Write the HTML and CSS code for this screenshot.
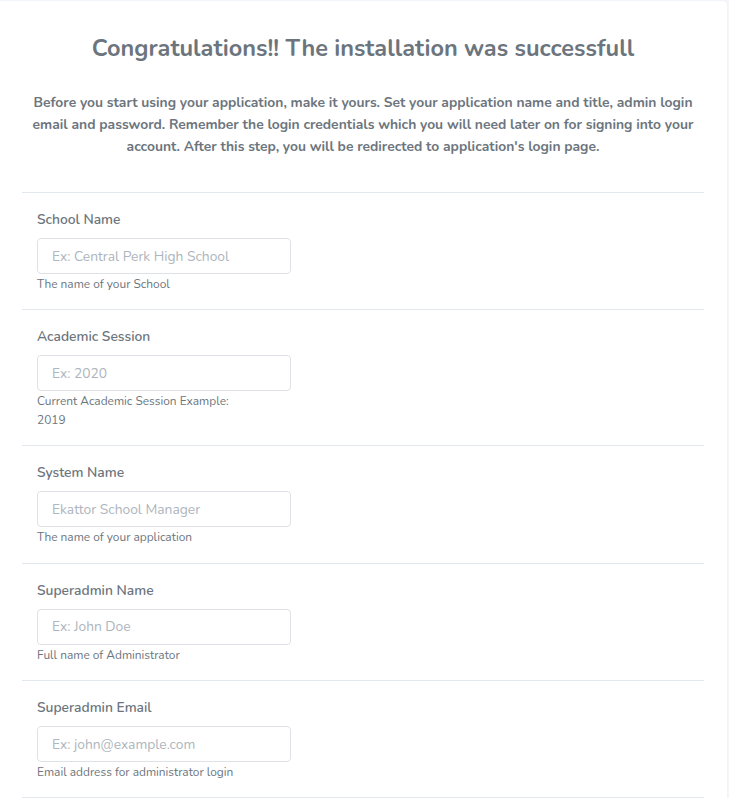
FILE: index.html
```html
<!DOCTYPE html>
<html>
<head>
<meta charset="utf-8">
<link rel="stylesheet" href="styles.css">
</head>
<body>
<div class="card">
  <div class="intro">
    <h1 class="title">Congratulations!! The installation was successfull</h1>
    <p class="lead">Before you start using your application, make it yours. Set your application name and title, admin login email and password. Remember the login credentials which you will need later on for signing into your account. After this step, you will be redirected to application's login page.</p>
  </div>
  <div class="field">
    <label class="label">School Name</label>
    <input class="input" type="text" placeholder="Ex: Central Perk High School">
    <small class="help">The name of your School</small>
  </div>
  <div class="field">
    <label class="label">Academic Session</label>
    <input class="input" type="text" placeholder="Ex: 2020">
    <small class="help">Current Academic Session Example: 2019</small>
  </div>
  <div class="field">
    <label class="label">System Name</label>
    <input class="input" type="text" placeholder="Ekattor School Manager">
    <small class="help">The name of your application</small>
  </div>
  <div class="field">
    <label class="label">Superadmin Name</label>
    <input class="input" type="text" placeholder="Ex: John Doe">
    <small class="help">Full name of Administrator</small>
  </div>
  <div class="field">
    <label class="label">Superadmin Email</label>
    <input class="input" type="text" placeholder="Ex: john@example.com">
    <small class="help">Email address for administrator login</small>
  </div>
  <div class="field">
    <label class="label">Superadmin Password</label>
    <input class="input" type="password" placeholder="Ex: ********">
    <small class="help">Password for administrator login</small>
  </div>
</div>
</body>
</html>
```
FILE: styles.css
```css
html, body {
  margin: 0;
  padding: 0;
  background: #f4f6fa;
  font-family: "Nunito", Lato, "Open Sans", sans-serif;
  color: #6c757d;
}
.card {
  background: #ffffff;
  margin: 1px 2px 0 0;
  border-radius: 0 4px 0 0;
  padding: 31px 23px 0 22px;
  box-shadow: 0 0 1px rgba(154,161,171,0.25);
  min-height: 900px;
}
.intro {
  padding: 0 6px 34px;
  border-bottom: 1px solid #e3e8ef;
  text-align: center;
}
.title {
  margin: 0;
  font-size: 23.5px;
  line-height: 32px;
  font-weight: 700;
  color: #6c757d;
}
.lead {
  margin: 28px 0 0;
  font-size: 13.85px;
  line-height: 22px;
  font-weight: 700;
  color: #6c757d;
}
.field {
  display: flex;
  flex-direction: column;
  align-items: flex-start;
  padding: 17px 15px 16px 15px;
  border-bottom: 1px solid #e3e8ef;
}
.label {
  font-size: 13.8px;
  line-height: 20px;
  font-weight: 600;
  color: #6c757d;
  margin-bottom: 8px;
}
.input {
  box-sizing: border-box;
  width: 254px;
  height: 36px;
  border: 1px solid #dee2e6;
  border-radius: 4px;
  padding: 0 14px;
  font-family: inherit;
  font-size: 13.8px;
  color: #6c757d;
  background: #fff;
  outline: none;
}
.input::placeholder {
  color: #adb5bd;
}
.help {
  width: 210px;
  margin-top: 1px;
  font-size: 11.9px;
  line-height: 18.4px;
  color: #6c757d;
}
```
